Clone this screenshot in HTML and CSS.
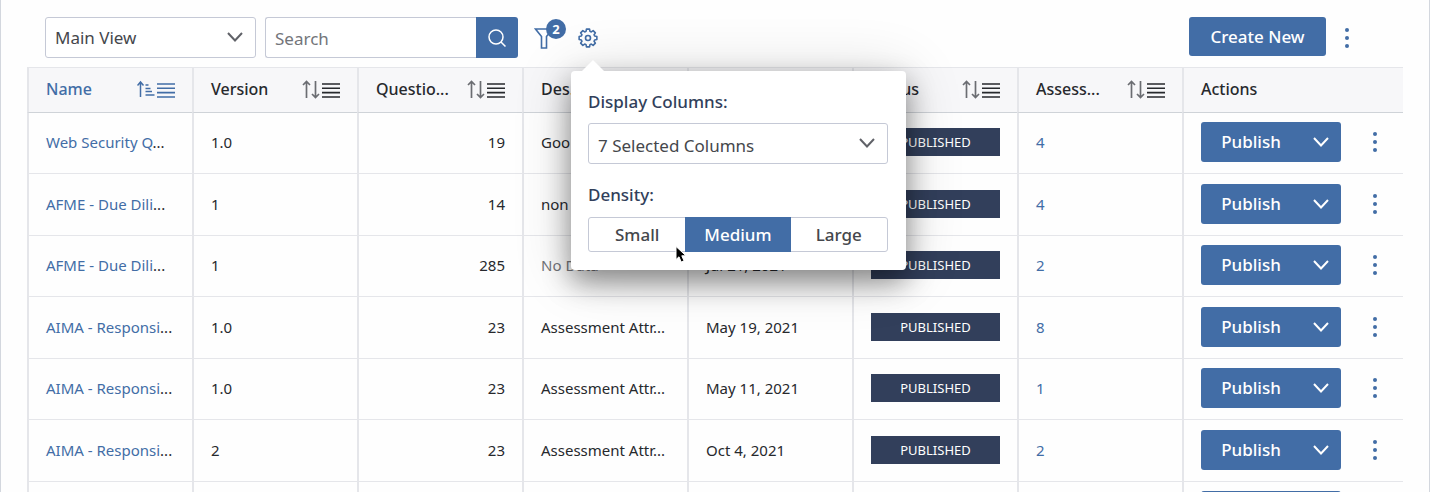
FILE: index.html
```html
<!DOCTYPE html>
<html lang="en">
<head>
<meta charset="utf-8">
<title>Questionnaires</title>
<link rel="stylesheet" href="styles.css">
</head>
<body>
<svg class="defs" aria-hidden="true">
  <symbol id="chevron" viewBox="0 0 18 12"><path d="M2 2l7 7.500l7-7.500" fill="none" stroke="currentColor" stroke-width="2"/></symbol>
  <symbol id="sort" viewBox="0 0 18 20"><path d="M4.500 19V3M1 6l3.500-3.500l3.500 3.500M13.500 2v16M10 15l3.500 3.500l3.500-3.500" fill="none" stroke="currentColor" stroke-width="1.700"/></symbol>
  <symbol id="sort-asc" viewBox="0 0 18 20"><path d="M3.500 18V3.500M.5 6.500l3-3.500l3 3.500M8.500 6h3M8.500 9.500h5M8.500 12.500h6.500M8.500 16h9" fill="none" stroke="currentColor" stroke-width="1.500"/></symbol>
  <symbol id="menu" viewBox="0 0 18 20"><path d="M0 5h18M0 9.300h18M0 13.600h18M0 18h18" fill="none" stroke="currentColor" stroke-width="1.600"/></symbol>
  <symbol id="dots" viewBox="0 0 6 22"><circle cx="3" cy="3" r="2"/><circle cx="3" cy="11" r="2"/><circle cx="3" cy="19" r="2"/></symbol>
</svg>
<main class="page">
  <div class="toolbar">
    <div class="select view-select">
      <select aria-label="View"><option>Main View</option></select>
      <svg class="chevron"><use href="#chevron"/></svg>
    </div>
    <form class="search">
      <input type="text" placeholder="Search" aria-label="Search">
      <button type="button" aria-label="Run search"><svg width="20" height="20" viewBox="0 0 20 20"><circle cx="9" cy="9" r="7" fill="none" stroke="currentColor" stroke-width="1.500"/><path d="M14 14l4.500 4.500" stroke="currentColor" stroke-width="1.500"/></svg></button>
    </form>
    <button class="icon-button filter" type="button" aria-label="Filters">
      <svg width="20" height="22" viewBox="0 0 20 22"><path d="M1.500 2h17l-6 7.500V21h-5V9.500z" fill="none" stroke="currentColor" stroke-width="1.600"/></svg>
      <span class="badge">2</span>
    </button>
    <div class="settings">
      <button class="icon-button" type="button" aria-label="Table settings">
        <svg width="20" height="20" viewBox="0 0 20 20" fill="none" stroke="currentColor" stroke-width="1.600"><path stroke-linejoin="round" d="M8.440 1.140H11.560L11.960 3.380L13.290 3.940L15.160 2.630L17.370 4.840L16.060 6.710L16.620 8.040L18.860 8.440V11.560L16.620 11.960L16.060 13.290L17.370 15.160L15.160 17.370L13.290 16.060L11.960 16.620L11.560 18.860H8.440L8.040 16.620L6.710 16.060L4.840 17.370L2.630 15.160L3.940 13.290L3.380 11.960L1.140 11.560V8.440L3.380 8.040L3.940 6.710L2.630 4.840L4.840 2.630L6.710 3.940L8.040 3.380Z"/><circle cx="10" cy="10" r="2.500"/></svg>
      </button>
      <section class="popover" aria-label="Display settings">
        <label for="columns">Display Columns:</label>
        <div class="select">
          <select id="columns"><option>7 Selected Columns</option></select>
          <svg class="chevron"><use href="#chevron"/></svg>
        </div>
        <span class="group-label" id="density">Density:</span>
        <div class="segments" role="group" aria-labelledby="density">
          <button type="button">Small</button>
          <button type="button" class="active" aria-pressed="true">Medium</button>
          <button type="button">Large</button>
        </div>
        <svg class="pointer" width="14" height="20" viewBox="0 0 14 20"><path d="M2 1.500v13l3-2.700 2.200 5.200 2.800-1.200-2.200-5h4.200z" fill="#000" stroke="#fff"/></svg>
      </section>
    </div>
    <button class="primary create" type="button">Create New</button>
    <button class="icon-button more" type="button" aria-label="More"><svg class="dots"><use href="#dots"/></svg></button>
  </div>

  <table>
    <thead>
      <tr>
        <th class="sorted"><div class="head"><span>Name</span><svg><use href="#sort-asc"/></svg><svg><use href="#menu"/></svg></div></th>
        <th><div class="head"><span>Version</span><svg class="sort"><use href="#sort"/></svg><svg><use href="#menu"/></svg></div></th>
        <th><div class="head"><span>Questio...</span><svg class="sort"><use href="#sort"/></svg><svg><use href="#menu"/></svg></div></th>
        <th><div class="head"><span>Des...</span><svg class="sort"><use href="#sort"/></svg><svg><use href="#menu"/></svg></div></th>
        <th><div class="head"><svg class="sort"><use href="#sort"/></svg><svg><use href="#menu"/></svg></div></th>
        <th><div class="head"><span>Status</span><svg class="sort"><use href="#sort"/></svg><svg><use href="#menu"/></svg></div></th>
        <th><div class="head"><span>Assess...</span><svg class="sort"><use href="#sort"/></svg><svg><use href="#menu"/></svg></div></th>
        <th class="last">Actions</th>
      </tr>
    </thead>
    <tbody id="rows"></tbody>
  </table>
</main>
<script src="rows.js"></script>
</body>
</html>
```
FILE: rows.js
```js
const rows = [
  ["Web Security Q", "1.0", "19", "Goo", "", "4"],
  ["AFME - Due Dili", "1", "14", "non", "", "4"],
  ["AFME - Due Dili", "1", "285", "No Data", "Jul 21, 2021", "2"],
  ["AIMA - Responsi", "1.0", "23", "Assessment Attr...", "May 19, 2021", "8"],
  ["AIMA - Responsi", "1.0", "23", "Assessment Attr...", "May 11, 2021", "1"],
  ["AIMA - Responsi", "2", "23", "Assessment Attr...", "Oct 4, 2021", "2"],
  ["", "", "", "", "", ""]
];
document.getElementById("rows").innerHTML = rows.map(([name, version, questions, description, date, count]) => `
  <tr>
    <td>${name && `<a href="#">${name}</a>...`}</td>
    <td>${version}</td>
    <td class="number">${questions}</td>
    <td${description === "No Data" ? ' class="muted"' : ""}>${description}</td>
    <td>${date}</td>
    <td>${name && `<span class="tag">PUBLISHED</span>`}</td>
    <td><a href="#">${count}</a></td>
    <td class="last"><div class="actions">
      <div class="split"><button class="primary" type="button">${name && "Publish"}</button><button class="primary" type="button" aria-label="Publish options"><svg class="chevron-icon"><use href="#chevron"/></svg></button></div>
      <button class="icon-button" type="button" aria-label="Row actions"><svg class="dots"><use href="#dots"/></svg></button>
    </div></td>
  </tr>`).join("");
```
FILE: styles.css
```css
* { box-sizing: border-box; }

body {
  margin: 0;
  overflow: hidden;
  background: #fefefe;
  color: #27292d;
  font: 15px/20px "Noto Sans", "Open Sans", sans-serif;
}

button, input, select { font: inherit; color: inherit; margin: 0; }
button { border: 0; padding: 0; background: none; }
svg { display: block; flex: none; }
a { color: #426da6; text-decoration: none; }

.defs { position: absolute; width: 0; height: 0; }

.page {
  height: 100vh;
  overflow: hidden;
  padding: 0 26px;
  border: solid #d3d7de;
  border-width: 0 1px;
}

.toolbar {
  display: flex;
  align-items: flex-start;
  padding: 17px 46px 9px 18px;
}

.select { position: relative; height: 41px; }
.select select {
  width: 100%;
  height: 100%;
  padding: 0 9px;
  appearance: none;
  border: 1px solid #c5c9d6;
  border-radius: 3px;
  background: #fff;
  color: #45474c;
  font-size: 17px;
}
.chevron {
  position: absolute;
  right: 12px;
  top: 14px;
  width: 18px;
  height: 12px;
  color: #606268;
  pointer-events: none;
}
.view-select { width: 211px; margin-right: 9px; }

.search { display: flex; width: 253px; height: 41px; }
.search input {
  flex: 1;
  min-width: 0;
  padding: 2px 9px 0;
  border: 1px solid #c5c9d6;
  border-right: 0;
  border-radius: 3px 0 0 3px;
  background: #fff;
  font-size: 17px;
}
.search input::placeholder { color: #73757a; opacity: 1; }
.search button {
  display: grid;
  place-items: center;
  width: 42px;
  border-radius: 0 3px 3px 0;
  background: #426da6;
  color: #fff;
}

.icon-button {
  position: relative;
  display: grid;
  place-items: center;
  height: 41px;
  color: #426da6;
}
.filter { margin-left: 16px; width: 20px; }
.badge {
  position: absolute;
  left: 12px;
  top: 2px;
  width: 20px;
  height: 20px;
  border-radius: 50%;
  background: #426da6;
  color: #fff;
  font-size: 13px;
  font-weight: 700;
  text-align: center;
}

.settings { position: relative; margin-left: 24px; }

.popover {
  position: absolute;
  z-index: 2;
  left: -7px;
  top: 54px;
  width: 335px;
  padding: 20px 18px 18px 17px;
  border-radius: 4px;
  background: #fff;
  box-shadow: 0 12px 28px rgba(0, 0, 0, .42), 0 4px 60px rgba(0, 0, 0, .16);
  color: #323f5b;
}
.popover::before {
  content: "";
  position: absolute;
  left: 11px;
  top: -11px;
  border: solid transparent;
  border-width: 0 11px 11px;
  border-bottom-color: #fff;
}
.popover label, .group-label {
  display: block;
  height: 22px;
  margin-bottom: 10px;
  font-size: 17px;
  line-height: 22px;
  font-weight: 550;
}
.group-label { margin: 20px 0 11px; }
.popover .select select { padding-top: 4px; }

.segments {
  display: grid;
  grid-template-columns: 97fr 106fr 97fr;
  height: 35px;
  border: 1px solid #c5c9d6;
  border-radius: 3px;
}
.segments button { color: #45474c; font-size: 17px; font-weight: 550; }
.segments .active { margin: -1px 0; background: #426da6; color: #fff; }
.pointer { position: absolute; left: 103px; top: 174px; }

.primary {
  background: #426da6;
  color: #fff;
  font-size: 17px;
  font-weight: 550;
}
.create {
  width: 137px;
  height: 39px;
  margin-left: auto;
  border-radius: 3px;
}
.more { width: 20px; margin-left: 11px; }
.dots { width: 6px; height: 22px; fill: currentColor; }

table {
  width: 100%;
  table-layout: fixed;
  border-collapse: separate;
  border-spacing: 0;
}
th, td {
  padding: 0 17px;
  border-left: 2px solid #e5e6ea;
  border-bottom: 1px solid #e5e6ea;
  text-align: left;
  white-space: nowrap;
}
th {
  height: 46px;
  padding-bottom: 2px;
  border-top: 1px solid #e5e6ea;
  border-bottom-color: #cfd3d8;
  background: #f7f7f9;
  font-size: 16px;
  font-weight: 550;
}
.last { width: 221px; }
td { height: 61px; padding-bottom: 2px; }
tr:nth-child(even) td { height: 62px; }

.head { display: flex; align-items: center; justify-content: flex-end; gap: 2px; }
.head span { margin-right: auto; }
.head svg { width: 18px; height: 20px; }
.head .sort { color: #6b6d72; }
.sorted { color: #426da6; }

.number { text-align: right; }
.muted { color: #73757a; }
.tag {
  display: block;
  height: 28px;
  background: #323f5b;
  color: #fff;
  font-size: 13px;
  line-height: 28px;
  text-align: center;
}

.actions { display: flex; align-items: center; }
.actions .icon-button { width: 20px; margin-left: 24px; }
.split {
  display: flex;
  width: 140px;
  height: 40px;
  border-radius: 3px;
  overflow: hidden;
}
.split button:first-child { width: 100px; }
.split button:last-child { flex: 1; display: grid; place-items: center; }
.chevron-icon { width: 18px; height: 12px; }
```
